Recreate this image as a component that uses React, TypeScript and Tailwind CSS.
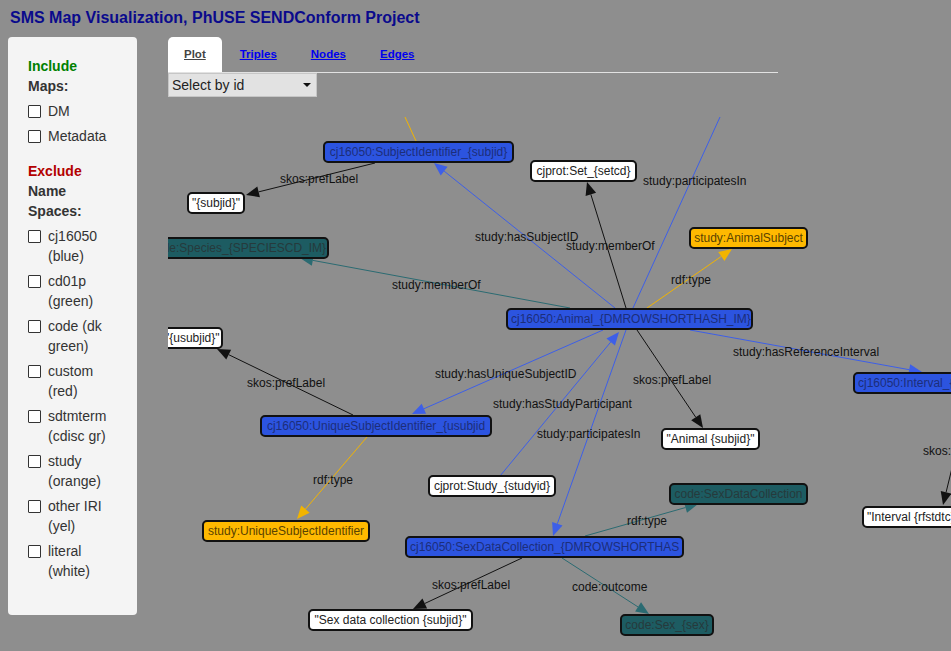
import React from "react";

type Kind = "blue" | "teal" | "orange" | "white";

interface GNode {
  text: string;
  x: number;
  y: number;
  w: number;
  kind: Kind;
  align?: "left" | "right" | "center";
}

interface GEdge {
  x1: number;
  y1: number;
  x2: number;
  y2: number;
  color: string;
  arrow?: boolean;
}

interface GLabel {
  text: string;
  x: number;
  y: number;
}

// canvas origin on the page
const OX = 168;
const OY = 117;

const kindClass: Record<Kind, string> = {
  blue: "bg-[#2c54e0] text-[#1c2e7a]",
  teal: "bg-[#1d5c62] text-[#263a3c]",
  orange: "bg-[#ffb900] text-[#5a4300]",
  white: "bg-white text-[#222]",
};

const alignClass = {
  left: "text-left",
  right: "text-right",
  center: "text-center",
};

const nodes: GNode[] = [
  { text: "cj16050:SubjectIdentifier_{subjid}", x: 323, y: 141, w: 191, kind: "blue" },
  { text: '"{subjid}"', x: 187, y: 192, w: 58, kind: "white" },
  { text: "cjprot:Set_{setcd}", x: 530, y: 160, w: 107, kind: "white" },
  { text: "code:Species_{SPECIESCD_IM}", x: 145, y: 237, w: 184, kind: "teal", align: "right" },
  { text: "study:AnimalSubject", x: 689, y: 227, w: 119, kind: "orange" },
  { text: "cj16050:Animal_{DMROWSHORTHASH_IM}", x: 506, y: 308, w: 247, kind: "blue" },
  { text: '"{usubjid}"', x: 160, y: 327, w: 63, kind: "white", align: "right" },
  { text: "cj16050:UniqueSubjectIdentifier_{usubjid", x: 260, y: 415, w: 232, kind: "blue" },
  { text: "study:UniqueSubjectIdentifier", x: 202, y: 520, w: 168, kind: "orange" },
  { text: "cjprot:Study_{studyid}", x: 428, y: 475, w: 128, kind: "white" },
  { text: "cj16050:SexDataCollection_{DMROWSHORTHAS", x: 405, y: 536, w: 279, kind: "blue" },
  { text: "code:SexDataCollection", x: 669, y: 483, w: 139, kind: "teal" },
  { text: '"Sex data collection {subjid}"', x: 308, y: 609, w: 165, kind: "white" },
  { text: "code:Sex_{sex}", x: 620, y: 614, w: 94, kind: "teal" },
  { text: '"Animal {subjid}"', x: 661, y: 428, w: 99, kind: "white" },
  { text: "cj16050:Interval_{DMROWSHORTHASH_IM}", x: 853, y: 372, w: 260, kind: "blue", align: "left" },
  { text: '"Interval {rfstdtc} - {rfendtc}"', x: 862, y: 506, w: 190, kind: "white", align: "left" },
];

const BLUE = "#3d5fe8";
const TEAL = "#2b6b72";
const YEL = "#f2b400";
const BLK = "#111111";

const edges: GEdge[] = [
  { x1: 405, y1: 117, x2: 416, y2: 141, color: YEL },
  { x1: 720, y1: 117, x2: 633, y2: 308, color: BLUE },
  { x1: 375, y1: 163, x2: 246, y2: 195, color: BLK, arrow: true },
  { x1: 615, y1: 308, x2: 434, y2: 163, color: BLUE, arrow: true },
  { x1: 626, y1: 308, x2: 587, y2: 182, color: BLK, arrow: true },
  { x1: 647, y1: 308, x2: 732, y2: 249, color: YEL, arrow: true },
  { x1: 570, y1: 308, x2: 300, y2: 258, color: TEAL, arrow: true },
  { x1: 690, y1: 330, x2: 922, y2: 372, color: BLUE, arrow: true },
  { x1: 637, y1: 330, x2: 703, y2: 428, color: BLK, arrow: true },
  { x1: 603, y1: 330, x2: 412, y2: 414, color: BLUE, arrow: true },
  { x1: 500, y1: 476, x2: 619, y2: 332, color: BLUE, arrow: true },
  { x1: 626, y1: 330, x2: 553, y2: 536, color: BLUE, arrow: true },
  { x1: 353, y1: 415, x2: 217, y2: 349, color: BLK, arrow: true },
  { x1: 367, y1: 437, x2: 297, y2: 519, color: YEL, arrow: true },
  { x1: 585, y1: 536, x2: 698, y2: 504, color: TEAL, arrow: true },
  { x1: 522, y1: 558, x2: 413, y2: 609, color: BLK, arrow: true },
  { x1: 562, y1: 558, x2: 649, y2: 614, color: TEAL, arrow: true },
  { x1: 952, y1: 468, x2: 943, y2: 505, color: BLK, arrow: true },
];

const labels: GLabel[] = [
  { text: "skos:prefLabel", x: 280, y: 178 },
  { text: "study:hasSubjectID", x: 475, y: 236 },
  { text: "study:memberOf", x: 566, y: 245 },
  { text: "study:participatesIn", x: 643, y: 180 },
  { text: "rdf:type", x: 671, y: 279 },
  { text: "study:memberOf", x: 392, y: 284 },
  { text: "study:hasReferenceInterval", x: 733, y: 351 },
  { text: "skos:prefLabel", x: 633, y: 379 },
  { text: "study:hasUniqueSubjectID", x: 435, y: 373 },
  { text: "skos:prefLabel", x: 247, y: 382 },
  { text: "study:hasStudyParticipant", x: 493, y: 403 },
  { text: "study:participatesIn", x: 537, y: 433 },
  { text: "rdf:type", x: 313, y: 479 },
  { text: "rdf:type", x: 627, y: 520 },
  { text: "skos:prefLabel", x: 432, y: 584 },
  { text: "code:outcome", x: 572, y: 586 },
  { text: "skos:", x: 923, y: 450 },
];

const maps = ["DM", "Metadata"];

const spaces: string[][] = [
  ["cj16050", "(blue)"],
  ["cd01p", "(green)"],
  ["code (dk", "green)"],
  ["custom", "(red)"],
  ["sdtmterm", "(cdisc gr)"],
  ["study", "(orange)"],
  ["other IRI", "(yel)"],
  ["literal", "(white)"],
];

const tabs = ["Plot", "Triples", "Nodes", "Edges"];

function Edge({ e }: { e: GEdge }) {
  if (!e.arrow) {
    return <line x1={e.x1} y1={e.y1} x2={e.x2} y2={e.y2} stroke={e.color} strokeWidth={1} />;
  }
  const dx = e.x2 - e.x1;
  const dy = e.y2 - e.y1;
  const d = Math.hypot(dx, dy);
  const ux = dx / d;
  const uy = dy / d;
  const len = 13;
  const hw = 5.5;
  const bx = e.x2 - ux * len;
  const by = e.y2 - uy * len;
  const px = -uy;
  const py = ux;
  const pts = `${e.x2},${e.y2} ${bx + px * hw},${by + py * hw} ${bx - px * hw},${by - py * hw}`;
  return (
    <g>
      <line x1={e.x1} y1={e.y1} x2={bx} y2={by} stroke={e.color} strokeWidth={1} />
      <polygon points={pts} fill={e.color} />
    </g>
  );
}

function CheckItem({ lines }: { lines: string[] }) {
  return (
    <li className="flex items-start gap-[7px]">
      <span className="mt-[4px] w-[13px] h-[13px] shrink-0 border border-[#333] bg-white rounded-[1px]" />
      <span className="leading-5 text-[#333]">
        {lines.map((l, i) => (
          <span key={i} className="block whitespace-nowrap">
            {l}
          </span>
        ))}
      </span>
    </li>
  );
}

const App: React.FC = () => {
  return (
    <div className="w-[951px] h-[651px] overflow-hidden bg-[#8e8e8e] font-['Liberation_Sans',Arial,sans-serif]">
      <h1 className="h-[37px] pl-[10px] pt-[8px] text-[16px] leading-[19px] font-bold text-[#0a0a8c]">
        SMS Map Visualization, PhUSE SENDConform Project
      </h1>

      <div className="flex">
        {/* Sidebar filters */}
        <aside className="ml-2 w-[129px] h-[578px] bg-[#f4f4f4] rounded-[4px] pt-[19px] px-5 text-[14px]">
          <div className="leading-5 font-bold text-[#008000]">Include</div>
          <div className="leading-5 font-bold text-[#333]">Maps:</div>
          <ul className="mt-[5px] flex flex-col gap-[5px]">
            {maps.map((m) => (
              <CheckItem key={m} lines={[m]} />
            ))}
          </ul>

          <div className="mt-[15px] leading-5 font-bold text-[#b30000]">Exclude</div>
          <div className="leading-5 font-bold text-[#333]">Name</div>
          <div className="leading-5 font-bold text-[#333]">Spaces:</div>
          <ul className="mt-[5px] flex flex-col gap-[5px]">
            {spaces.map((s) => (
              <CheckItem key={s[0]} lines={s} />
            ))}
          </ul>
        </aside>

        <main className="ml-[31px] flex flex-col">
          {/* Tabs */}
          <div className="flex gap-[2px] h-[36px] w-[610px] border-b border-[#e2e2e2]">
            {tabs.map((t, i) => (
              <div
                key={t}
                className={`flex items-center px-4 text-[11.5px] font-bold underline ${
                  i === 0 ? "bg-white rounded-t-[5px] text-[#444]" : "text-[#0000ee]"
                }`}
              >
                {t}
              </div>
            ))}
          </div>

          {/* Select */}
          <div className="flex items-center justify-between w-[149px] h-[24px] bg-[#e2e2e2] border border-[#c6c6c6] pl-[3px] pr-[5px] text-[14px] text-[#222]">
            <span>Select by id</span>
            <svg width="8" height="4" viewBox="0 0 8 4">
              <polygon points="0,0 8,0 4,4" fill="#111" />
            </svg>
          </div>

          {/* Graph canvas */}
          <div className="relative mt-[20px] w-[783px] h-[534px] overflow-hidden">
            <svg
              className="absolute inset-0"
              width={783}
              height={534}
              viewBox={`${OX} ${OY} 783 534`}
            >
              {edges.map((e, i) => (
                <Edge key={i} e={e} />
              ))}
            </svg>

            {labels.map((l, i) => (
              <span
                key={i}
                className="absolute text-[12px] leading-[14px] text-[#111] whitespace-nowrap"
                style={{ left: l.x - OX, top: l.y - OY - 6 }}
              >
                {l.text}
              </span>
            ))}

            {nodes.map((n, i) => (
              <div
                key={i}
                className={`absolute h-[22px] border-2 border-[#111] rounded-[5px] text-[12px] leading-[18px] whitespace-nowrap overflow-hidden px-[3px] ${
                  kindClass[n.kind]
                } ${alignClass[n.align || "center"]}`}
                style={{ left: n.x - OX, top: n.y - OY, width: n.w }}
              >
                {n.text}
              </div>
            ))}
          </div>
        </main>
      </div>
    </div>
  );
};

export default App;
